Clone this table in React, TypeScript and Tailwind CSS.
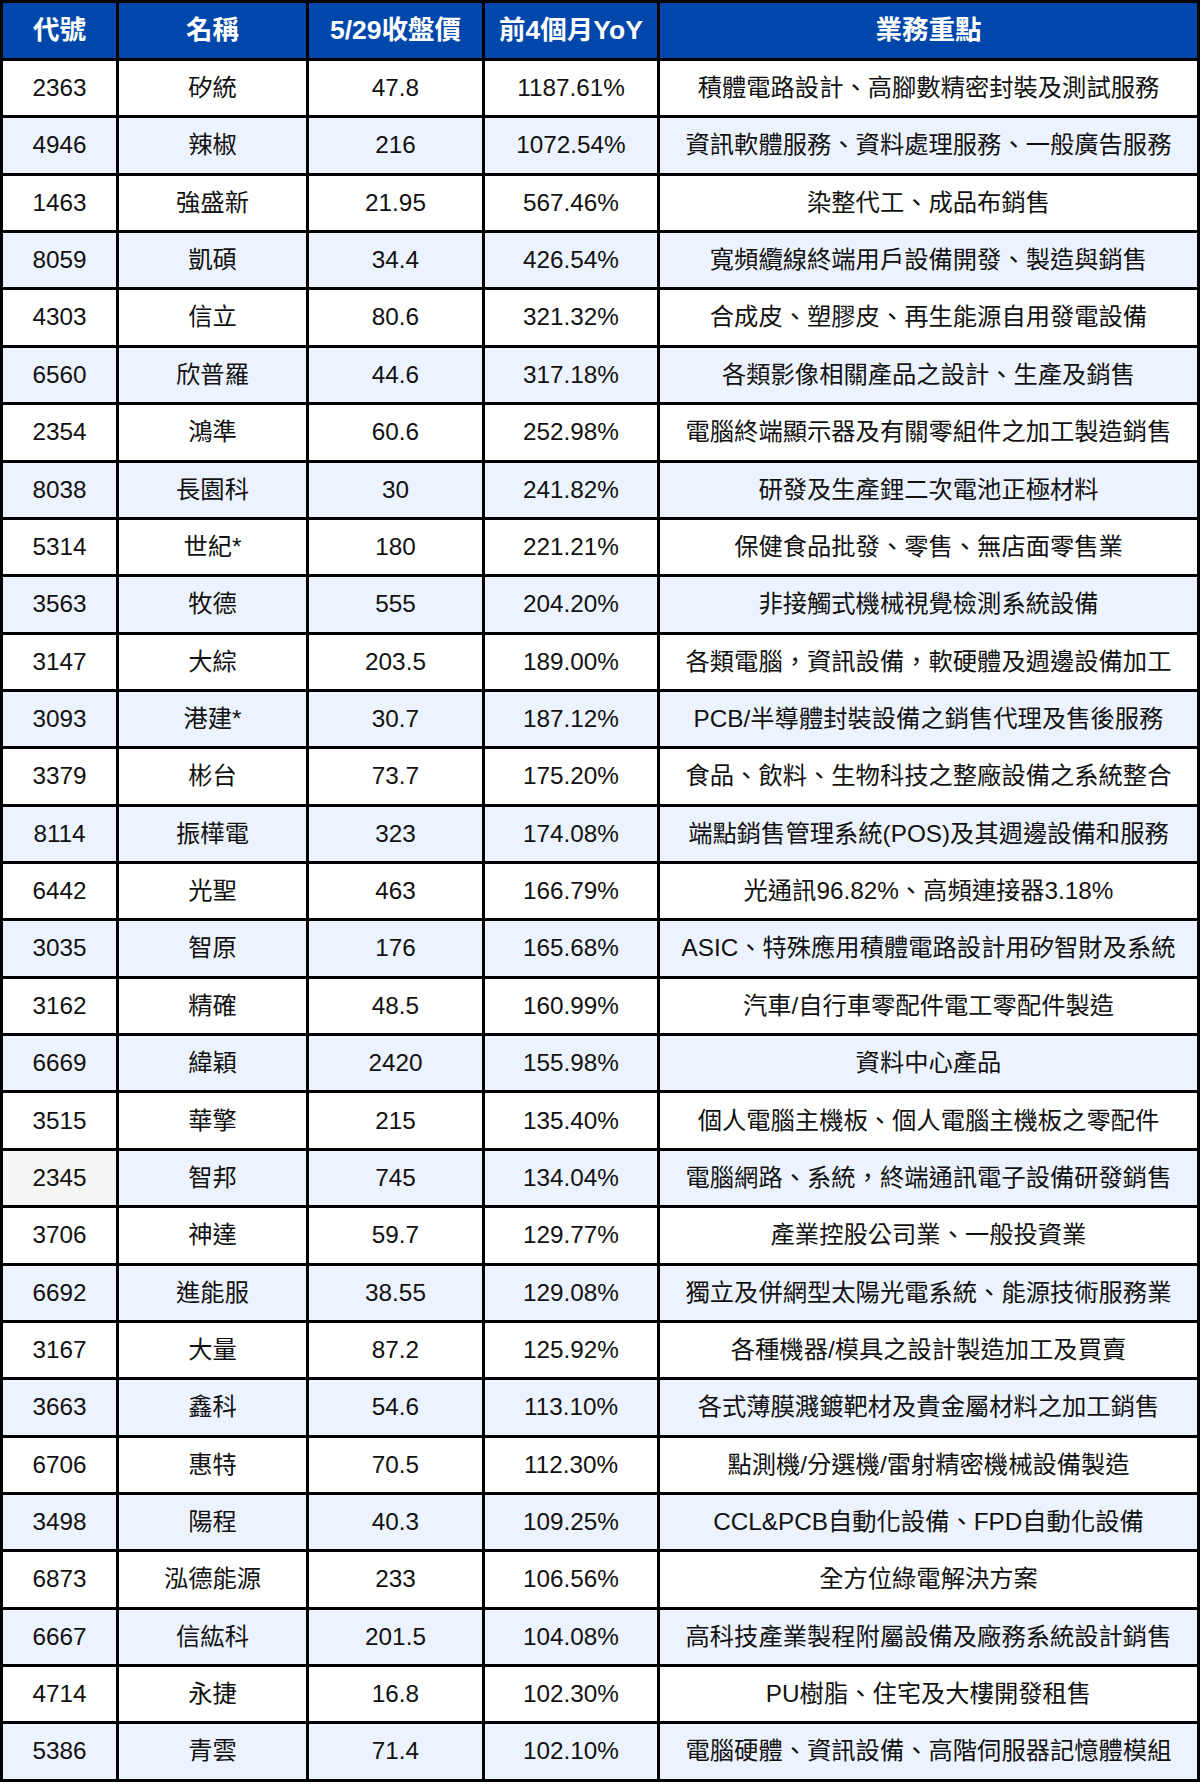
import React from "react";

const rows: [string, string, string, string, string][] = [
  ["2363", "矽統", "47.8", "1187.61%", "積體電路設計、高腳數精密封裝及測試服務"],
  ["4946", "辣椒", "216", "1072.54%", "資訊軟體服務、資料處理服務、一般廣告服務"],
  ["1463", "強盛新", "21.95", "567.46%", "染整代工、成品布銷售"],
  ["8059", "凱碩", "34.4", "426.54%", "寬頻纜線終端用戶設備開發、製造與銷售"],
  ["4303", "信立", "80.6", "321.32%", "合成皮、塑膠皮、再生能源自用發電設備"],
  ["6560", "欣普羅", "44.6", "317.18%", "各類影像相關產品之設計、生產及銷售"],
  ["2354", "鴻準", "60.6", "252.98%", "電腦終端顯示器及有關零組件之加工製造銷售"],
  ["8038", "長園科", "30", "241.82%", "研發及生產鋰二次電池正極材料"],
  ["5314", "世紀*", "180", "221.21%", "保健食品批發、零售、無店面零售業"],
  ["3563", "牧德", "555", "204.20%", "非接觸式機械視覺檢測系統設備"],
  ["3147", "大綜", "203.5", "189.00%", "各類電腦，資訊設備，軟硬體及週邊設備加工"],
  ["3093", "港建*", "30.7", "187.12%", "PCB/半導體封裝設備之銷售代理及售後服務"],
  ["3379", "彬台", "73.7", "175.20%", "食品、飲料、生物科技之整廠設備之系統整合"],
  ["8114", "振樺電", "323", "174.08%", "端點銷售管理系統(POS)及其週邊設備和服務"],
  ["6442", "光聖", "463", "166.79%", "光通訊96.82%、高頻連接器3.18%"],
  ["3035", "智原", "176", "165.68%", "ASIC、特殊應用積體電路設計用矽智財及系統"],
  ["3162", "精確", "48.5", "160.99%", "汽車/自行車零配件電工零配件製造"],
  ["6669", "緯穎", "2420", "155.98%", "資料中心產品"],
  ["3515", "華擎", "215", "135.40%", "個人電腦主機板、個人電腦主機板之零配件"],
  ["2345", "智邦", "745", "134.04%", "電腦網路、系統，終端通訊電子設備研發銷售"],
  ["3706", "神達", "59.7", "129.77%", "產業控股公司業、一般投資業"],
  ["6692", "進能服", "38.55", "129.08%", "獨立及併網型太陽光電系統、能源技術服務業"],
  ["3167", "大量", "87.2", "125.92%", "各種機器/模具之設計製造加工及買賣"],
  ["3663", "鑫科", "54.6", "113.10%", "各式薄膜濺鍍靶材及貴金屬材料之加工銷售"],
  ["6706", "惠特", "70.5", "112.30%", "點測機/分選機/雷射精密機械設備製造"],
  ["3498", "陽程", "40.3", "109.25%", "CCL&PCB自動化設備、FPD自動化設備"],
  ["6873", "泓德能源", "233", "106.56%", "全方位綠電解決方案"],
  ["6667", "信紘科", "201.5", "104.08%", "高科技產業製程附屬設備及廠務系統設計銷售"],
  ["4714", "永捷", "16.8", "102.30%", "PU樹脂、住宅及大樓開發租售"],
  ["5386", "青雲", "71.4", "102.10%", "電腦硬體、資訊設備、高階伺服器記憶體模組"],
];

const headers = ["代號", "名稱", "5/29收盤價", "前4個月YoY", "業務重點"];

export default function App() {
  return (
    <div className="w-[1200px] h-[1785px] bg-white">
      <div
        className="grid grid-cols-[113px_187px_173px_172px_537px] gap-[3px] bg-black p-[3px] text-[#111] text-[24.3px] leading-none"
        style={{ fontFamily: '"Liberation Sans", "Noto Sans CJK TC", sans-serif' }}
      >
        {headers.map((h) => (
          <div
            key={h}
            className="h-[55px] bg-[#0047ab] text-white font-bold text-[26.5px] flex items-center justify-center"
          >
            {h}
          </div>
        ))}
        {rows.map((r, i) =>
          r.map((c, j) => {
            const shaded = i % 2 === 1;
            let bg = shaded ? "bg-[#edf3fe]" : "bg-white";
            if (r[0] === "2345" && j === 0) bg = "bg-[#f5f5f3]";
            return (
              <div
                key={`${i}-${j}`}
                className={`h-[54.37px] flex items-center justify-center whitespace-nowrap ${bg}`}
              >
                {c}
              </div>
            );
          })
        )}
      </div>
    </div>
  );
}
